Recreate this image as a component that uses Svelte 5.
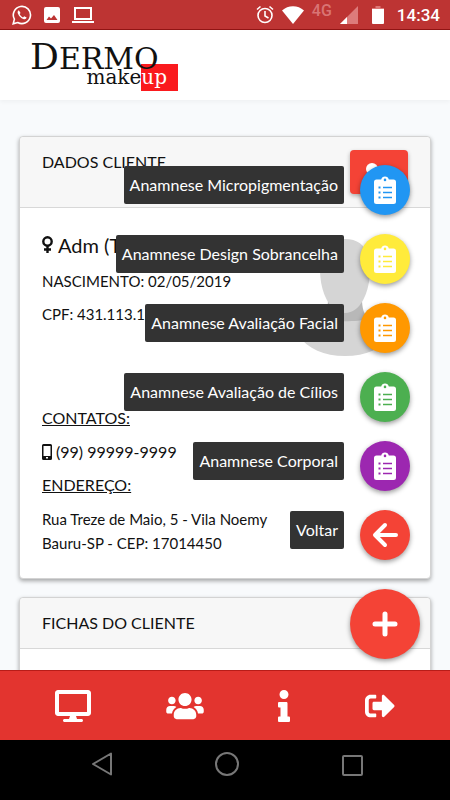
<script lang="ts">
  interface Action {
    label: string;
    color: string;
    icon: 'clipboard' | 'back';
  }

  const actions: Action[] = [
    { label: 'Anamnese Micropigmentação', color: '#2196f3', icon: 'clipboard' },
    { label: 'Anamnese Design Sobrancelha', color: '#ffeb3b', icon: 'clipboard' },
    { label: 'Anamnese Avaliação Facial', color: '#ff9800', icon: 'clipboard' },
    { label: 'Anamnese Avaliação de Cílios', color: '#4caf50', icon: 'clipboard' },
    { label: 'Anamnese Corporal', color: '#9c27b0', icon: 'clipboard' },
    { label: 'Voltar', color: '#f44336', icon: 'back' },
  ];

  let open = $state(true);
</script>

<div class="screen">
  <div class="status-bar">
    <div class="status-group left">
      <svg width="20" height="20" viewBox="0 0 20 20" fill="none" stroke="#fff">
        <path d="M1.2 18.8l1.2-4.6a8.6 8.6 0 1 1 3.3 3.3z" stroke-width="1.6" />
        <path d="M6.8 5.2c-1.3.8-1.5 2.2-.7 3.8 1.1 2.4 2.8 4 5.2 5 1.7.6 2.9 0 3.3-1.5l-2.4-1.3-1.2 1.2c-1.6-.7-2.7-1.8-3.4-3.3l1-1.2z" fill="#fff" stroke="none" />
      </svg>
      <svg width="16" height="16" viewBox="0 0 16 16">
        <path fill="#fff" fill-rule="evenodd" d="M2 0h12a2 2 0 0 1 2 2v12a2 2 0 0 1-2 2H2a2 2 0 0 1-2-2V2a2 2 0 0 1 2-2zM2.5 13h11L10 8l-3 3.500L5 9.500z" />
      </svg>
      <svg width="22" height="16" viewBox="0 0 22 16">
        <path fill="none" stroke="#fff" stroke-width="2" d="M3 1h16v11H3z" />
        <path fill="#fff" d="M0 14h22v2H0z" />
      </svg>
    </div>
    <div class="status-group right">
      <svg width="18" height="19" viewBox="0 0 18 19" fill="none" stroke="#fff" stroke-width="1.6">
        <circle cx="9" cy="10.5" r="7" />
        <path d="M9 6v5l3.5 2M1 4.500L4.500 1.500M17 4.500L13.500 1.500" />
      </svg>
      <svg width="22" height="18" viewBox="0 0 22 18">
        <path fill="#fff" d="M0 4.5C6-1.3 16-1.3 22 4.5L11 18z" />
      </svg>
      <span class="network">4G</span>
      <svg width="18" height="18" viewBox="0 0 18 18">
        <path fill="#dd7b7b" d="M18 0v18H0z" />
        <path fill="#fff" d="M7 11v7H0z" />
      </svg>
      <svg class="battery" width="12" height="18" viewBox="0 0 12 18">
        <path fill="#d77" d="M3.5 0h5v2H12v3H0V2h3.500z" />
        <path fill="#fff" d="M0 3h12v14a1 1 0 0 1-1 1H1a1 1 0 0 1-1-1z" />
      </svg>
      <time>14:34</time>
    </div>
  </div>

  <div class="app">
    <header class="topbar">
      <a class="logo" href="/" aria-label="Dermo makeup">
        <span class="logo-name"><span class="logo-initial">D</span>ERMO</span>
        <span class="logo-sub">make<span class="logo-up">up</span></span>
      </a>
    </header>

    <main class="content">
      <section class="card">
        <div class="card-header">
          <h2>DADOS CLIENTE</h2>
          <button class="edit" type="button" aria-label="Editar cliente">
            <svg width="26" height="26" viewBox="0 0 26 26" fill="#fff">
              <circle cx="10" cy="6" r="6" />
              <path d="M0 24v-4a6 6 0 0 1 6-6h8a6 6 0 0 1 6 6v4z" />
            </svg>
          </button>
        </div>
        <div class="card-body">
          <svg class="avatar" width="100" height="118" viewBox="0 0 100 118">
            <path fill="#d5d5d5" d="M4 96C10 86 22 83 30 78h42c8 5 20 8 26 18-10 14-26 21-47 21S14 110 4 96z" />
            <path fill="#b8b8b8" d="M34 60h34c0 9 2 16 7 20-12 3-36 3-48 0 5-4 7-11 7-20z" />
            <path fill="#d5d5d5" d="M51 0c16 0 25 10 25 30 0 24-10 44-25 44S26 54 26 30C26 10 35 0 51 0z" />
          </svg>
          <p class="name">
            <svg width="11" height="18" viewBox="0 0 11 18" fill="none" stroke="#111" stroke-width="2.4">
              <circle cx="5.5" cy="5.5" r="4.2" />
              <path d="M5.500 9.500V17M2 13.500h7" />
            </svg>
            Adm (T
          </p>
          <p class="field">NASCIMENTO: 02/05/2019</p>
          <p class="field">CPF: 431.113.1</p>
          <h3 class="contacts">CONTATOS:</h3>
          <p class="phone">
            <svg width="10" height="16" viewBox="0 0 10 16">
              <path fill="#111" fill-rule="evenodd" d="M1.5 0h7A1.5 1.5 0 0 1 10 1.500v13A1.500 1.500 0 0 1 8.500 16h-7A1.500 1.500 0 0 1 0 14.500v-13A1.500 1.500 0 0 1 1.500 0zm0 2v10h7V2zM4 13v1.500h2V13z" />
            </svg>
            (99) 99999-9999
          </p>
          <h3>ENDEREÇO:</h3>
          <p class="address">Rua Treze de Maio, 5 - Vila Noemy<br />Bauru-SP - CEP: 17014450</p>
        </div>
      </section>

      <section class="card">
        <div class="card-header">
          <h2>FICHAS DO CLIENTE</h2>
        </div>
        <div class="card-body"></div>
      </section>
    </main>

    <div class="speed-dial">
      {#if open}
        <ul>
          {#each actions as action}
            <li>
              <button type="button" class="action">
                <span class="tooltip">{action.label}</span>
                <span class="round" style="background: {action.color}">
                  {#if action.icon === 'clipboard'}
                    <svg width="22" height="28" viewBox="0 0 22 28">
                      <path fill="#fff" fill-rule="evenodd" d="M2.500 3.500H7.200a3.900 3.900 0 0 1 7.600 0h4.700A2.500 2.500 0 0 1 22 6v19.500a2.500 2.500 0 0 1-2.500 2.500h-17A2.500 2.500 0 0 1 0 25.500V6a2.500 2.500 0 0 1 2.500-2.500zM11 2.600a1.300 1.300 0 1 0 0 2.600 1.300 1.300 0 0 0 0-2.600zM4.500 10.500v2h2v-2zm4.500.2v1.600h9v-1.600zM4.500 15.500v2h2v-2zm4.500.2v1.600h9v-1.600zM4.500 20.500v2h2v-2zm4.500.2v1.600h9v-1.600z" />
                    </svg>
                  {:else}
                    <svg width="26" height="26" viewBox="0 0 26 26" fill="none" stroke="#fff" stroke-width="4" stroke-linecap="round" stroke-linejoin="round">
                      <path d="M13 3L3 13l10 10M4 13h20" />
                    </svg>
                  {/if}
                </span>
              </button>
            </li>
          {/each}
        </ul>
      {/if}
      <button type="button" class="main-action" aria-label="Ações" onclick={() => (open = !open)}>
        <svg width="26" height="26" viewBox="0 0 26 26" stroke="#fff" stroke-width="5" stroke-linecap="round">
          <path d="M13 3v20M3 13h20" />
        </svg>
      </button>
    </div>
  </div>

  <nav class="tabs">
    <a href="#inicio" aria-label="Início">
      <svg width="36" height="32" viewBox="0 0 576 512" fill="#fff">
        <path d="M528 0H48C21.5 0 0 21.5 0 48v320c0 26.5 21.5 48 48 48h192l-16 48h-72c-13.3 0-24 10.700-24 24s10.700 24 24 24h272c13.300 0 24-10.700 24-24s-10.700-24-24-24h-72l-16-48h192c26.500 0 48-21.500 48-48V48c0-26.500-21.500-48-48-48zm-16 352H64V64h448v288z" />
      </svg>
    </a>
    <a href="#clientes" aria-label="Clientes">
      <svg width="38" height="30" viewBox="0 0 640 512" fill="#fff">
        <path d="M96 224c35.3 0 64-28.7 64-64s-28.7-64-64-64-64 28.7-64 64 28.7 64 64 64zm448 0c35.3 0 64-28.700 64-64s-28.700-64-64-64-64 28.700-64 64 28.700 64 64 64zm32 32h-64c-17.600 0-33.500 7.100-45.100 18.600 40.300 22.100 68.900 62 75.100 109.400h66c17.700 0 32-14.300 32-32v-32c0-35.300-28.700-64-64-64zm-256 0c61.900 0 112-50.100 112-112S381.900 32 320 32 208 82.100 208 144s50.100 112 112 112zm76.800 32h-8.300c-20.800 10-43.900 16-68.500 16s-47.600-6-68.500-16h-8.300C179.600 288 128 339.600 128 403.200V432c0 26.500 21.500 48 48 48h288c26.500 0 48-21.500 48-48v-28.800c0-63.600-51.600-115.200-115.200-115.200zm-223.700-13.400C161.500 263.100 145.600 256 128 256H64c-35.300 0-64 28.700-64 64v32c0 17.700 14.300 32 32 32h65.900c6.300-47.400 34.900-87.300 75.200-109.400z" />
      </svg>
    </a>
    <a href="#sobre" aria-label="Sobre">
      <svg width="12" height="32" viewBox="0 0 192 512" fill="#fff">
        <path d="M20 424.2h20V279.8H20c-11 0-20-9-20-20V212c0-11 9-20 20-20h112c11 0 20 9 20 20v212.200h20c11 0 20 9 20 20V492c0 11-9 20-20 20H20c-11 0-20-9-20-20v-47.800c0-11 9-20 20-20zM96 0C56.200 0 24 32.200 24 72s32.200 72 72 72 72-32.200 72-72S135.800 0 96 0z" />
      </svg>
    </a>
    <a href="#sair" aria-label="Sair">
      <svg width="30" height="30" viewBox="0 0 512 512" fill="#fff">
        <path d="M497 273L329 441c-15 15-41 4.500-41-17v-96H152c-13.300 0-24-10.700-24-24v-96c0-13.300 10.700-24 24-24h136V88c0-21.400 25.900-32 41-17l168 168c9.300 9.400 9.300 24.600 0 34zM192 436v-40c0-6.600-5.400-12-12-12H96c-17.700 0-32-14.300-32-32V160c0-17.700 14.300-32 32-32h84c6.600 0 12-5.400 12-12V76c0-6.600-5.400-12-12-12H96c-53 0-96 43-96 96v192c0 53 43 96 96 96h84c6.600 0 12-5.400 12-12z" />
      </svg>
    </a>
  </nav>

  <div class="system-nav">
    <button type="button" aria-label="Voltar">
      <svg width="24" height="24" viewBox="0 0 24 24" fill="none" stroke="#777" stroke-width="2" stroke-linejoin="round">
        <path d="M21 1.500v21L3 12z" />
      </svg>
    </button>
    <button type="button" aria-label="Tela inicial">
      <svg width="24" height="24" viewBox="0 0 24 24" fill="none" stroke="#777" stroke-width="2">
        <circle cx="12" cy="12" r="11" />
      </svg>
    </button>
    <button type="button" aria-label="Recentes">
      <svg width="24" height="24" viewBox="0 0 24 24" fill="none" stroke="#777" stroke-width="2">
        <rect x="3" y="4" width="19" height="19" rx="1" />
      </svg>
    </button>
  </div>
</div>

<style>
  :global(body) {
    margin: 0;
  }

  .screen {
    display: flex;
    flex-direction: column;
    height: 100vh;
    font-family: Lato, 'Open Sans', sans-serif;
    font-size: 16px;
    color: #111;
    background: #f8fafc;
  }

  button {
    padding: 0;
    border: none;
    background: none;
    font: inherit;
    cursor: pointer;
  }

  h2,
  h3,
  p,
  ul {
    margin: 0;
    padding: 0;
  }

  svg {
    display: block;
    flex: none;
  }

  .status-bar {
    display: flex;
    align-items: center;
    justify-content: space-between;
    box-sizing: border-box;
    height: 30px;
    padding: 0 10px 0 12px;
    background: #bd3433;
    border-bottom: 1px solid #901414;
  }

  .status-group {
    display: flex;
    align-items: center;
    gap: 12px;
  }

  .status-group.right {
    gap: 8px;
  }

  .network {
    padding-bottom: 8px;
    font: 500 16px/16px Roboto, sans-serif;
    color: #d97474;
  }

  .battery {
    margin-left: 6px;
  }

  time {
    margin-left: 5px;
    font: 500 17px/28px Roboto, sans-serif;
    color: #fff;
  }

  .app {
    position: relative;
    flex: 1;
    min-height: 0;
    overflow: hidden;
  }

  .topbar {
    display: flex;
    align-items: flex-start;
    box-sizing: border-box;
    height: 70px;
    padding: 13px 30px 0;
    background: #fff;
    box-shadow: 0 2px 4px rgba(0, 0, 0, 0.04);
  }

  .logo {
    display: flex;
    flex-direction: column;
    width: 148px;
    color: #111;
    text-decoration: none;
  }

  /* sits above the red block, which tucks under the O */
  .logo-name {
    z-index: 1;
    height: 28px;
    font: 30px/28px 'DejaVu Serif', serif;
  }

  .logo-initial {
    font-size: 36px;
  }

  .logo-sub {
    align-self: flex-end;
    margin-top: -7px;
    font: 20px/27px 'DejaVu Serif', serif;
  }

  .logo-up {
    display: inline-block;
    padding-right: 11px;
    color: #fff;
    background: #fa1a1e;
  }

  .content {
    display: flex;
    flex-direction: column;
    gap: 18px;
    padding: 36px 19px;
  }

  .card {
    background: #fff;
    border: 1px solid #d3d3d3;
    border-radius: 4px;
    box-shadow: 0 2px 4px rgba(0, 0, 0, 0.35);
  }

  .card-header {
    display: flex;
    align-items: flex-start;
    justify-content: space-between;
    padding: 13px 22px;
    background: #f7f7f7;
    border-bottom: 1px solid #d8d8d8;
    border-radius: 4px 4px 0 0;
  }

  h2 {
    font-size: 16px;
    font-weight: 400;
    line-height: 24px;
  }

  .edit {
    display: flex;
    justify-content: center;
    box-sizing: border-box;
    width: 58px;
    height: 44px;
    padding: 13px 8px 0 0;
    background: #f44336;
    border-radius: 4px;
    box-shadow: 0 2px 4px rgba(0, 0, 0, 0.3);
    overflow: hidden;
  }

  .card-body {
    min-height: 60px;
    padding: 23px 22px;
  }

  .avatar {
    float: right;
    margin: 8px 14px 0 0;
  }

  .name {
    display: flex;
    align-items: center;
    gap: 5px;
    margin-bottom: 10px;
    font-size: 20px;
    line-height: 28px;
  }

  .field {
    margin-bottom: 9px;
    font-size: 15px;
    line-height: 24px;
  }

  h3 {
    margin-bottom: 10px;
    font-size: 16px;
    font-weight: 400;
    line-height: 24px;
    text-decoration: underline;
  }

  .contacts {
    margin-top: 80px;
  }

  .phone {
    display: flex;
    align-items: center;
    gap: 4px;
    margin-bottom: 9px;
    line-height: 24px;
  }

  .address {
    font-size: 15px;
    line-height: 24px;
  }

  .speed-dial {
    position: absolute;
    right: 30px;
    bottom: 11px;
    display: flex;
    flex-direction: column;
    align-items: flex-end;
    gap: 29px;
  }

  .speed-dial ul {
    display: flex;
    flex-direction: column;
    align-items: flex-end;
    gap: 19px;
    padding-right: 10px;
    list-style: none;
  }

  .action {
    display: flex;
    align-items: flex-start;
    gap: 16px;
  }

  .tooltip {
    margin-top: 1px;
    padding: 7px 6px;
    font-size: 16px;
    line-height: 24px;
    color: #fff;
    background: #333;
    border-radius: 2px;
    white-space: nowrap;
  }

  .round,
  .main-action {
    display: flex;
    align-items: center;
    justify-content: center;
    border-radius: 50%;
    box-shadow: 0 2px 5px rgba(0, 0, 0, 0.4);
  }

  .round {
    width: 50px;
    height: 50px;
  }

  .main-action {
    width: 70px;
    height: 70px;
    background: #f44336;
  }

  .tabs {
    display: flex;
    align-items: center;
    justify-content: space-between;
    box-sizing: border-box;
    height: 70px;
    padding: 0 55px;
    background: #e3342f;
    border-top: 1px solid #b81c18;
  }

  .system-nav {
    display: flex;
    align-items: flex-start;
    justify-content: space-between;
    box-sizing: border-box;
    height: 60px;
    padding: 12px 86px 12px 90px;
    background: #000;
  }
</style>
